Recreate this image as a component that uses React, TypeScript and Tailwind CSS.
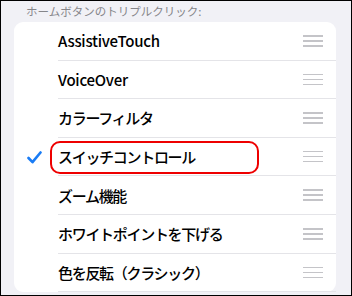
import React from 'react';

const items = [
  'AssistiveTouch',
  'VoiceOver',
  'カラーフィルタ',
  'スイッチコントロール',
  'ズーム機能',
  'ホワイトポイントを下げる',
  '色を反転（クラシック）',
];

const Grip: React.FC = () => (
  <div className="flex flex-col gap-[3.5px] w-[20px]">
    <div className="h-[1.5px] bg-[#c4c4c8]" />
    <div className="h-[1.5px] bg-[#c4c4c8]" />
    <div className="h-[1.5px] bg-[#c4c4c8]" />
  </div>
);

const Check: React.FC = () => (
  <svg width="15" height="13" viewBox="0 0 15 13" fill="none">
    <path d="M1.5 7 L5.5 11.2 L13.5 1.5" stroke="#1a7cf5" strokeWidth="2.6" strokeLinecap="round" strokeLinejoin="round" />
  </svg>
);

const App: React.FC = () => {
  return (
    <div
      className="w-[352px] h-[296px] overflow-hidden bg-[#f1f1f6] border border-black"
      style={{ fontFamily: '"Noto Sans CJK JP", "Noto Sans", sans-serif' }}
    >
      <div className="h-[21px] pl-[25px] pt-[1px] text-[11.5px] leading-[18px] text-[#86868a]">
        ホームボタンのトリプルクリック:
      </div>
      <div className="ml-[13px] mr-[15px] bg-white rounded-[9px]">
        {items.map((label, i) => (
          <div key={label} className="relative flex items-center h-[38.6px]">
            <div className="w-[44px] flex justify-end pr-[16px] shrink-0">
              {i === 3 && <Check />}
            </div>
            <div className="flex-1 flex items-center h-full border-b border-[#e4e4e8]">
              <span
                className={`flex-1 text-[15px] font-medium text-black leading-none ${
                  i < 2 ? 'tracking-[-0.25px]' : 'tracking-[-1.3px]'
                }`}
              >
                {label}
              </span>
              <div className="pr-[13px]">
                <Grip />
              </div>
            </div>
            {i === 3 && (
              <div className="absolute left-[36px] top-[3px] w-[209px] h-[33px] border-[2.5px] border-[#ee0000] rounded-[10px]" />
            )}
          </div>
        ))}
      </div>
    </div>
  );
};

export default App;
